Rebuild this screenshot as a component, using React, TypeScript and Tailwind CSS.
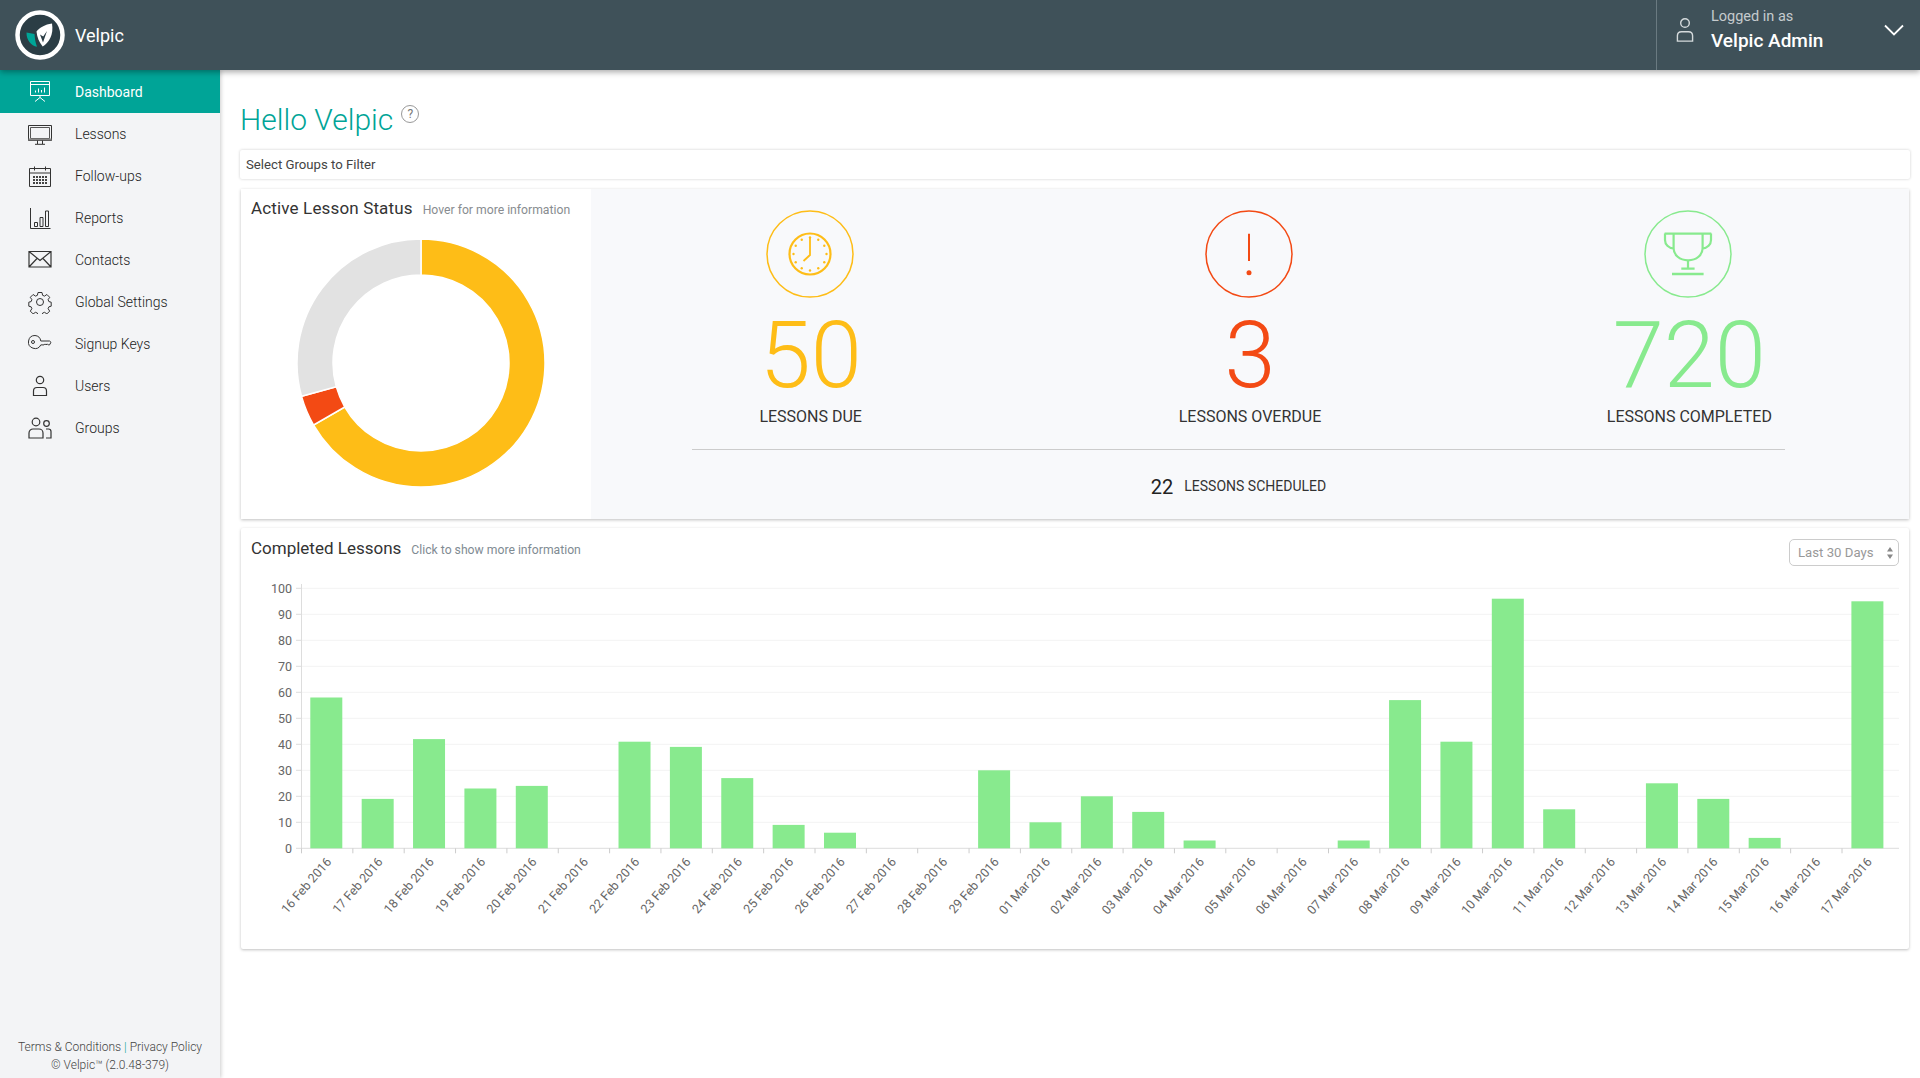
import React from "react";

const font = "[font-family:Roboto,sans-serif]";

const DashIcon = () => (
  <svg width="24" height="24" viewBox="0 0 24 24" fill="none" stroke="currentColor" strokeWidth="1">
    <path d="M2.5 1.500h19v14h-19zM2.5 4.500h19" />
    <path d="M7.500 12.500v-2M10.500 12.500v-4M13.500 12.500v-2.500M16.500 12.500v-5" strokeWidth="1" />
    <path d="M12 15.500v2M7 21.500l5-4 5 4" />
  </svg>
);
const MonitorIcon = () => (
  <svg width="24" height="24" viewBox="0 0 24 24" fill="none" stroke="#333">
    <path d="M.5 3.500h23v15H.5z" />
    <path d="M2.500 5.500h19v11h-19z" stroke="#555" />
    <path d="M.5 17.500h23" stroke="#888" strokeWidth="2" />
    <path d="M9.500 18.500v3.500M14.500 18.500v3.500M7 22.300h10" />
  </svg>
);
const CalendarIcon = () => (
  <svg width="24" height="24" viewBox="0 0 24 24" fill="none" stroke="#333">
    <path d="M1.500 4.500h21v18h-21zM1.500 9h21" />
    <path d="M6.500 2.500v4M17.500 2.500v4" />
    <path d="M5 13h14M5 16h14M5 19h14" strokeWidth="2" strokeDasharray="2 1" stroke="#444" />
  </svg>
);
const ReportsIcon = () => (
  <svg width="24" height="24" viewBox="0 0 24 24" fill="none" stroke="#333">
    <path d="M2.500 2v20.500h20" />
    <path d="M6.500 16.500h3v4h-3zM12 11.500h3v9h-3zM17.500 5h3v15.500h-3z" />
  </svg>
);
const MailIcon = () => (
  <svg width="24" height="24" viewBox="0 0 24 24" fill="none" stroke="#333" strokeWidth="1.200">
    <path d="M1 3.500h22v15.500H1zM1 3.500l11 9 11-9M1 19l8-8.500M23 19l-8-8.500" />
  </svg>
);
const GearIcon = () => (
  <svg width="24" height="24" viewBox="0 0 24 24" fill="none" stroke="#333" strokeWidth="1">
    <circle cx="12" cy="12" r="3.500" />
    <path d="M10 2.500h4l.6 2.800 1.900.8 2.400-1.600 2.800 2.800-1.600 2.400.8 1.900 2.300.6v4l-2.300.6-.8 1.900 1.600 2.400-2.800 2.800-2.400-1.600-1.900.8-.6 2.300h-4l-.6-2.300-1.900-.8-2.400 1.600-2.800-2.800 1.600-2.400-.8-1.900-2.300-.6v-4l2.300-.6.8-1.900-1.600-2.400 2.800-2.800 2.400 1.600 1.900-.8z" />
  </svg>
);
const KeyIcon = () => (
  <svg width="24" height="24" viewBox="0 0 24 24" fill="none" stroke="#333" strokeWidth="1">
    <g transform="translate(0 -2)">
      <path d="M7 5.500a6.500 6.500 0 1 0 5.800 9.400H16l1-1 1 1 1.200-1 1 1h1.300l1.500-2.600-1.500-1.300H12.800A6.500 6.500 0 0 0 7 5.500z" />
      <circle cx="5" cy="12" r="1.500" />
    </g>
  </svg>
);
const UserIcon = ({ c = "#333", s = 24 }: { c?: string; s?: number }) => (
  <svg width={s} height={s} viewBox="0 0 24 24" fill="none" stroke={c} strokeWidth="1.200">
    <circle cx="12" cy="6" r="3.700" />
    <path d="M5.500 21.500v-4.500c0-2 1.500-3.500 3.500-3.500h6c2 0 3.500 1.500 3.500 3.500v4.500z" />
  </svg>
);
const GroupsIcon = () => (
  <svg width="24" height="24" viewBox="0 0 24 24" fill="none" stroke="#333" strokeWidth="1.200">
    <circle cx="8" cy="6" r="3.800" />
    <circle cx="18.500" cy="7.500" r="2.800" />
    <path d="M1 22v-5c0-2.200 1.800-4 4-4h6c2.200 0 4 1.800 4 4v5zM18 13h2.500c1.500 0 2.500 1 2.500 2.500V22h-5" />
  </svg>
);

const nav: [string, React.ReactNode][] = [
  ["Dashboard", <DashIcon />],
  ["Lessons", <MonitorIcon />],
  ["Follow-ups", <CalendarIcon />],
  ["Reports", <ReportsIcon />],
  ["Contacts", <MailIcon />],
  ["Global Settings", <GearIcon />],
  ["Signup Keys", <KeyIcon />],
  ["Users", <UserIcon />],
  ["Groups", <GroupsIcon />],
];

const Logo = () => (
  <svg width="50" height="50" viewBox="0 0 50 50">
    <circle cx="25" cy="25" r="22.500" fill="#2b3d45" stroke="#fff" strokeWidth="4.500" />
    <path d="M11.500 22.500L19.500 24c.3 4.500 1 9 2.500 12.700-6-.7-10.700-7-10.500-14.200z" fill="#00a497" />
    <path d="M37 13.500C30 14.500 24.500 17.500 21.500 21.500 22 27 24 32 27.700 36.500 33.500 33 39 25 37 13.500z" fill="#fff" />
    <path d="M25 24.500L28 32.500 32 21 28.200 26.500z" fill="#2b3d45" />
  </svg>
);

const ClockIcon = () => (
  <svg width="88" height="88" viewBox="0 0 88 88" fill="none" stroke="#febd17">
    <circle cx="44" cy="44" r="43" strokeWidth="1.500" />
    <circle cx="44" cy="44" r="20.500" strokeWidth="2.200" />
    <path d="M44 28v17l-6.500 6" strokeWidth="1.800" />
    <g fill="#febd17" stroke="none">
      {Array.from({ length: 12 }).map((_, i) => {
        const a = (i * Math.PI) / 6;
        return <circle key={i} cx={44 + 16.5 * Math.sin(a)} cy={44 - 16.5 * Math.cos(a)} r="1.200" />;
      })}
    </g>
  </svg>
);
const AlertIcon = () => (
  <svg width="88" height="88" viewBox="0 0 88 88" fill="none" stroke="#f34a14">
    <circle cx="44" cy="44" r="43" strokeWidth="1.500" />
    <path d="M44 23.700V51" strokeWidth="2" />
    <circle cx="44" cy="62.700" r="2.500" fill="#f34a14" stroke="none" />
  </svg>
);
const TrophyIcon = () => (
  <svg width="88" height="88" viewBox="0 0 88 88" fill="none" stroke="#88ea8e">
    <circle cx="44" cy="44" r="43" strokeWidth="1.500" />
    <path d="M20.600 23.600h46.700M29.600 23.600V38c0 7 6 12.300 14.500 12.300S58.600 45 58.600 38V23.600" strokeWidth="2.200" />
    <path d="M21 23.600V30c0 4.500 3.500 8 8.600 8.500M67 23.600V30c0 4.500-3.500 8-8.600 8.500" strokeWidth="2.200" />
    <path d="M44 50.300v8.300M37.300 58.600h13.300" strokeWidth="2.200" />
    <path d="M28 64h31.600" strokeWidth="2.500" />
  </svg>
);

const polar = (r: number, deg: number) => {
  const a = (deg * Math.PI) / 180;
  return [124 + r * Math.sin(a), 124 - r * Math.cos(a)];
};
const arc = (from: number, to: number) => {
  const [x1, y1] = polar(124, from);
  const [x2, y2] = polar(124, to);
  const [x3, y3] = polar(88, to);
  const [x4, y4] = polar(88, from);
  const large = to - from > 180 ? 1 : 0;
  return `M${x1} ${y1}A124 124 0 ${large} 1 ${x2} ${y2}L${x3} ${y3}A88 88 0 ${large} 0 ${x4} ${y4}Z`;
};

const Donut = () => (
  <svg width="248" height="248" viewBox="0 0 248 248">
    <path d={arc(0, 240)} fill="#febd17" stroke="#fff" strokeWidth="1.500" />
    <path d={arc(240, 254.4)} fill="#f34a14" stroke="#fff" strokeWidth="1.500" />
    <path d={arc(254.4, 360)} fill="#e2e2e2" stroke="#fff" strokeWidth="1.500" />
  </svg>
);

const values = [58, 19, 42, 23, 24, 0, 41, 39, 27, 9, 6, 0, 0, 30, 10, 20, 14, 3, 0, 0, 3, 57, 41, 96, 15, 0, 25, 19, 4, 0, 95];
const dates = [
  ...Array.from({ length: 14 }, (_, i) => `${16 + i} Feb 2016`),
  ...Array.from({ length: 17 }, (_, i) => `${String(i + 1).padStart(2, "0")} Mar 2016`),
];

const Chart = () => {
  const X0 = 61.5;
  const base = 270.3;
  return (
    <svg width="1669" height="370" viewBox="0 0 1669 370" className="block">
      {Array.from({ length: 11 }).map((_, i) => {
        const y = base - i * 26;
        return (
          <g key={i}>
            {i > 0 && <line x1={X0} x2="1659" y1={y} y2={y} stroke="#f3f3f3" />}
            <line x1="56" x2={X0} y1={y} y2={y} stroke="#ddd" />
            <text x="52" y={y + 4.3} textAnchor="end" fontSize="12.5" fill="#666" fontFamily="Roboto, sans-serif">
              {i * 10}
            </text>
          </g>
        );
      })}
      <line x1={X0} x2={X0} y1="6" y2={base} stroke="#ddd" />
      <line x1={X0} x2="1659" y1={base} y2={base} stroke="#ddd" />
      {values.map((v, i) => {
        const x = 70.3 + i * 51.37;
        const t = X0 + i * 51.35;
        return (
          <g key={i}>
            <rect x={x} y={base - v * 2.6} width="32" height={v * 2.6} fill="#88ea8e" />
            <line x1={t} x2={t} y1={base} y2={base + 5} stroke="#ccc" />
            <text
              transform={`translate(${t + 30.5} ${base + 14}) rotate(-49)`}
              textAnchor="end"
              fontSize="12.5"
              fill="#666"
              fontFamily="Roboto, sans-serif"
            >
              {dates[i]}
            </text>
          </g>
        );
      })}
    </svg>
  );
};

const Stat = ({ icon, value, label, color }: { icon: React.ReactNode; value: string; label: string; color: string }) => (
  <div className="flex flex-col items-center">
    <div className="mt-[21px] mr-[2px] h-[88px]">{icon}</div>
    <div className={`mt-[8px] h-[100px] text-[92px] font-light leading-[100px] ${color}`}>{value}</div>
    <div className="-mt-px text-[16px] leading-[24px] text-[#333]">{label}</div>
  </div>
);

export default function App() {
  return (
    <div className={`flex h-screen w-full flex-col overflow-hidden bg-white ${font}`}>
      <header className="relative z-10 flex h-[70px] shrink-0 items-center bg-[#3f5159] shadow-[0_2px_6px_rgba(0,0,0,0.35)]">
        <div className="ml-[15px]">
          <Logo />
        </div>
        <span className="ml-[10px] text-[18px] text-white">Velpic</span>
        <div className="ml-auto flex h-full w-[264px] items-center border-l border-[#6a7a81] pb-[10px] pl-[14px]">
          <UserIcon c="#d5dadc" s={28} />
          <div className="ml-[12px] flex flex-col">
            <span className="text-[14.5px] leading-[20px] text-[#c5cbce]">Logged in as</span>
            <span className="mt-[2px] text-[19px] leading-[24px] font-medium text-white">Velpic Admin</span>
          </div>
          <svg width="20" height="12" viewBox="0 0 20 12" fill="none" stroke="#fff" strokeWidth="1.800" className="ml-auto mr-[16px]">
            <path d="M1 1.500l9 9 9-9" />
          </svg>
        </div>
      </header>
      <div className="flex min-h-0 flex-1">
        <aside className="flex w-[220px] shrink-0 flex-col bg-[#f3f4f6] shadow-[1px_0_4px_rgba(0,0,0,0.2)]">
          <nav className="flex flex-col">
            {nav.map(([label, icon], i) => (
              <div
                key={label as string}
                className={
                  i === 0
                    ? "flex h-[43px] items-center bg-[#00a497] pt-px pl-[28px] text-[14px] text-white"
                    : "flex h-[42px] items-center pl-[28px] text-[14px] font-light text-[#222]"
                }
              >
                <span className="flex w-[47px] shrink-0">{icon}</span>
                <span>{label}</span>
              </div>
            ))}
          </nav>
          <div className="mt-auto pb-[4px] text-center text-[12px] leading-[18px] font-light text-[#444]">
            <div>
              Terms &amp; Conditions <span className="text-[#00a497]">|</span> Privacy Policy
            </div>
            <div>© Velpic™ (2.0.48-379)</div>
          </div>
        </aside>
        <main className="min-w-0 flex-1 pr-[10px] pl-[20px]">
          <div className="flex h-[80px] items-start pt-[30px]">
            <h1 className="text-[30px] leading-[40px] font-light text-[#00a497]">Hello Velpic</h1>
            <span className="mt-[5px] ml-[8px] flex h-[18px] w-[18px] items-center justify-center rounded-full border border-[#999] text-[12px] leading-none text-[#777]">
              ?
            </span>
          </div>
          <div className="flex h-[29px] items-center rounded-[2px] bg-white pl-[6px] text-[13.2px] text-[#444] shadow-[0_0_3px_rgba(0,0,0,0.2)]">
            Select Groups to Filter
          </div>
          <section className="mt-[10px] mr-[1px] ml-px flex h-[330px] shadow-[0_1px_3px_rgba(0,0,0,0.25)]">
            <div className="w-[350px] shrink-0 bg-white pl-[10px]">
              <div className="flex h-[38px] items-baseline pt-[9px]">
                <span className="text-[17px] leading-[20px] tracking-[0.15px] text-[#333]">Active Lesson Status</span>
                <span className="ml-[10px] text-[12.2px] text-[#888c90]">Hover for more information</span>
              </div>
              <div className="mt-[12px] ml-[46px]">
                <Donut />
              </div>
            </div>
            <div className="flex-1 bg-[#f8f9fb]">
              <div className="grid grid-cols-3">
                <Stat icon={<ClockIcon />} value="50" label="LESSONS DUE" color="text-[#febd17]" />
                <Stat icon={<AlertIcon />} value="3" label="LESSONS OVERDUE" color="text-[#f34a14]" />
                <Stat icon={<TrophyIcon />} value="720" label="LESSONS COMPLETED" color="text-[#88ea8e]" />
              </div>
              <div className="mt-[20px] ml-[101px] flex h-[70px] w-[1093px] items-center justify-center border-t border-[#ccc] pt-[4px]">
                <span className="text-[20px] text-[#222]">22</span>
                <span className="ml-[11px] text-[14px] text-[#333]">LESSONS SCHEDULED</span>
              </div>
            </div>
          </section>
          <section className="mt-[9px] mr-[1px] ml-px h-[421px] rounded-[2px] bg-white shadow-[0_1px_3px_rgba(0,0,0,0.25)]">
            <div className="flex h-[50px] items-start pt-[10px] pr-[10px] pl-[10px]">
              <span className="text-[17px] leading-[20px] text-[#333]">Completed Lessons</span>
              <span className="mt-[2px] ml-[10px] text-[12.2px] leading-[20px] text-[#7f8b93]">Click to show more information</span>
              <div className="mt-[1px] ml-auto flex h-[27px] w-[110px] items-center rounded-[5px] border border-[#ccc] pl-[8px] text-[13.2px] text-[#999]">
                Last 30 Days
                <svg width="6" height="12" viewBox="0 0 6 12" fill="#888" className="ml-auto mr-[5px]">
                  <path d="M3 0l3 4.500H0zM3 12l3-4.500H0z" />
                </svg>
              </div>
            </div>
            <div className="-ml-px">
              <Chart />
            </div>
          </section>
        </main>
      </div>
    </div>
  );
}
